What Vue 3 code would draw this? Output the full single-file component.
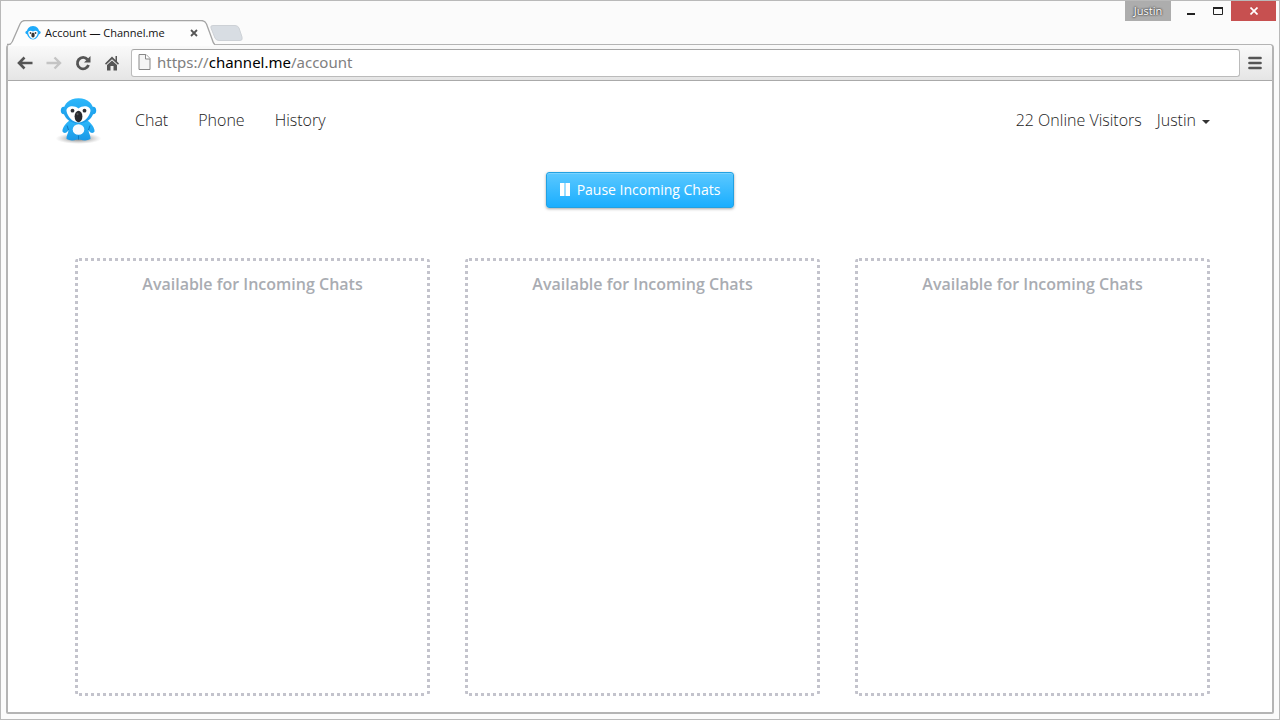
<script setup>
const links = ['Chat', 'Phone', 'History']
const slots = [1, 2, 3]
</script>

<template>
  <div class="window">
    <header class="titlebar">
      <div class="tab">
        <svg class="tab-shape" width="208" height="26" viewBox="0 0 208 26" aria-hidden="true">
          <path d="M0 26C4 25 5 24 6 21L13 4Q14.500 .5 18 .5H194Q198 .5 199.500 4L206 20Q207 24 208 26Z" fill="#fdfdfd" />
          <path d="M0 24.500C4 24.500 5 23 6 20L13 4Q14.500 .5 18 .5H194Q198 .5 199.500 4L205 19Q206.500 24 208 24.500" fill="none" stroke="#a5a5a5" stroke-width="1.300" />
        </svg>
        <svg class="favicon" width="16" height="16" viewBox="0 0 16 16" aria-hidden="true">
          <ellipse cx="2" cy="7.500" rx="1.600" ry="1.800" fill="#1eaafa" />
          <ellipse cx="14" cy="7.500" rx="1.600" ry="1.800" fill="#1eaafa" />
          <path d="M8 1C4 1 1.800 4 1.800 7.500C1.800 11 5 14.500 8 14.500S14.200 11 14.200 7.500C14.200 4 12 1 8 1Z" fill="#1eaafa" />
          <path d="M8 6.500C6 5 3 5.500 3.200 8C3.800 11 6 13.800 8 13.800S12.200 11 12.800 8C13 5.500 10 5 8 6.500Z" fill="#fff" />
          <circle cx="5.500" cy="8" r=".9" fill="#444" />
          <circle cx="10.500" cy="8" r=".9" fill="#444" />
          <ellipse cx="8" cy="10" rx="1.700" ry="2.500" fill="#333" />
        </svg>
        <span class="tab-title">Account — Channel.me</span>
        <button class="tab-close" aria-label="Close tab">
          <svg width="8" height="8" viewBox="0 0 8 8"><path d="M1 1L7 7M7 1L1 7" stroke="#555" stroke-width="1.800" /></svg>
        </button>
      </div>
      <button class="new-tab" aria-label="New tab">
        <svg width="33" height="18" viewBox="0 0 33 18"><path d="M3 1.500H25Q28 1.500 29 4L32 13Q33 16.500 30 16.500H9Q6 16.500 5 14L1 4Q0 1.500 3 1.500Z" fill="#d8dde3" stroke="#cdd1d6" /></svg>
      </button>
      <div class="controls">
        <button class="profile">Justin</button>
        <button class="control" aria-label="Minimize"><svg width="10" height="10" viewBox="0 0 10 10"><path d="M1 8H9" stroke="#222" stroke-width="2" /></svg></button>
        <button class="control" aria-label="Maximize"><svg width="10" height="10" viewBox="0 0 10 10"><path d="M.5 1.500H9.500V8.500H.5Z" fill="none" stroke="#222" /><path d="M0 2H10" stroke="#222" stroke-width="2" /></svg></button>
        <button class="control close" aria-label="Close window"><svg width="8" height="8" viewBox="0 0 8 8"><path d="M.5 .5L7.500 7.500M7.500 .5L.5 7.500" stroke="#fff" stroke-width="1.700" /></svg></button>
      </div>
    </header>

    <div class="frame">
      <div class="toolbar">
        <button class="tool" aria-label="Back">
          <svg width="16" height="14" viewBox="0 0 16 14" fill="none" stroke="#555" stroke-width="2.600"><path d="M2 7H15.500M7.500 1.500L2 7L7.500 12.500" /></svg>
        </button>
        <button class="tool" aria-label="Forward" disabled>
          <svg width="16" height="14" viewBox="0 0 16 14" fill="none" stroke="#c4c4c4" stroke-width="2.400"><path d="M14 7H.5M8.500 1.500L14 7L8.500 12.500" /></svg>
        </button>
        <button class="tool" aria-label="Reload">
          <svg width="16" height="16" viewBox="0 0 16 16"><path d="M12.500 4.500A5.700 5.700 0 1 0 13.500 10" fill="none" stroke="#555" stroke-width="2.800" /><path d="M15.500 1V7.500H9Z" fill="#555" /></svg>
        </button>
        <button class="tool" aria-label="Home">
          <svg width="16" height="16" viewBox="0 0 16 16" fill="#555"><path d="M8 1.500L1 8.500L2 9.800L8 4.200L14 9.800L15 8.500L13 6.500V1H11.500V5Z" /><path d="M3 10L8 5.500L13 10V15.500H9.500V11H6.500V15.500H3Z" /></svg>
        </button>
        <div class="address">
          <svg width="13" height="16" viewBox="0 0 13 16" fill="#f5f5f5" stroke="#888" aria-hidden="true"><path d="M1 .5H8L12 4.500V15.500H1Z" /><path d="M7.500 .5V5H12" fill="#fff" /></svg>
          <div class="url"><span>https://</span><b>channel.me</b><span>/account</span></div>
        </div>
        <button class="menu" aria-label="Menu">
          <svg width="14" height="14" viewBox="0 0 14 14" stroke="#555" stroke-width="2.700" stroke-linecap="round"><path d="M1.500 2H12.500M1.500 7H12.500M1.500 12H12.500" /></svg>
        </button>
      </div>

      <div class="page">
        <nav class="navbar">
          <a class="logo" href="#" aria-label="Channel.me">
            <svg width="48" height="50" viewBox="0 0 48 50">
              <defs>
                <radialGradient id="shade"><stop offset="0" stop-color="#555" stop-opacity=".9" /><stop offset="1" stop-color="#999" stop-opacity="0" /></radialGradient>
                <linearGradient id="fur" x2="0" y2="1"><stop offset="0" stop-color="#2db8fb" /><stop offset="1" stop-color="#1a98e6" /></linearGradient>
              </defs>
              <ellipse cx="23.500" cy="43.500" rx="23" ry="5.500" fill="url(#shade)" />
              <path d="M15 25C11 28 7 33 7.500 36.500C9 39 12 38 13.500 35C13.500 38 11 41 11.500 44Q16 46.500 22 44.500H25Q31 46.500 35.500 44C36 41 33.500 38 33.500 35C35 38 38 39 39.500 36.500C40 33 36 28 32 25Z" fill="url(#fur)" />
              <path d="M12 30.500L13.500 35M35 30.500L33.500 35M23.500 40.500V44.500" stroke="#0d79c0" stroke-width="1" fill="none" />
              <ellipse cx="23.500" cy="34.500" rx="5.800" ry="5.300" fill="#f7fbff" />
              <ellipse cx="8.800" cy="15.500" rx="3" ry="3.800" fill="#1ca4ef" />
              <ellipse cx="38.200" cy="15.500" rx="3" ry="3.800" fill="#1ca4ef" />
              <path d="M23.500 3.300C14 3.300 9 9 8.200 16C9 23.500 15.500 28.500 23.500 28.500S38 23.500 38.800 16C38 9 33 3.300 23.500 3.300Z" fill="url(#fur)" />
              <path d="M23.500 13.500C19 9.500 11 11 11.500 16C12.500 22 18 27.500 23.500 27.500S34.500 22 35.500 16C36 11 28 9.500 23.500 13.500Z" fill="#fff" />
              <circle cx="17.500" cy="15.700" r="1.900" fill="#303338" />
              <circle cx="29.500" cy="15.700" r="1.900" fill="#303338" />
              <ellipse cx="23.500" cy="21.500" rx="3.900" ry="5.700" fill="#292a2e" />
              <ellipse cx="22.500" cy="19" rx="1" ry="1.300" fill="#555" />
            </svg>
          </a>
          <div class="links"><a v-for="link in links" :key="link" href="#">{{ link }}</a></div>
          <div class="account">
            <a href="#">22 Online Visitors</a>
            <button class="user">Justin <i class="caret"></i></button>
          </div>
        </nav>

        <main>
          <button class="pause">
            <svg width="10" height="13" viewBox="0 0 10 13" fill="#fff" aria-hidden="true"><path d="M0 0H4.500V13H0ZM5.500 0H10V13H5.500Z" /></svg>
            Pause Incoming Chats
          </button>
          <div class="slots">
            <section v-for="slot in slots" :key="slot" class="slot"><h2>Available for Incoming Chats</h2></section>
          </div>
        </main>
      </div>
    </div>
  </div>
</template>

<style>
body { background: #fbfbfb; }
</style>

<style scoped>
* { box-sizing: border-box; }
button { border: 0; padding: 0; background: none; font: inherit; color: inherit; }
svg { display: block; flex: none; }
a { color: inherit; text-decoration: none; }

.window {
  min-height: 100vh;
  padding: 0 5px 5px;
  border: 1px solid #b9b9b9;
  background: #fbfbfb;
  display: flex;
  flex-direction: column;
  font-family: "Open Sans", "Noto Sans", sans-serif;
}
.titlebar { height: 43px; display: flex; align-items: flex-start; }
.tab {
  position: relative;
  z-index: 1;
  width: 208px;
  height: 26px;
  margin-top: 19px;
  margin-left: 1px;
  padding: 0 17px 0 18px;
  display: flex;
  align-items: center;
  font-size: 11px;
  line-height: 24px;
  color: #111;
}
.tab-shape { position: absolute; left: 0; top: 0; }
.favicon, .tab-title, .tab-close { position: relative; }
.tab-title { margin-left: 4px; flex: 1; white-space: nowrap; }
.new-tab { margin: 23px 0 0 -5px; }
.controls { margin-left: auto; display: flex; height: 20px; }
.profile {
  width: 46px;
  background: #adadad;
  color: #fff;
  font-size: 11px;
  line-height: 20px;
  text-shadow: 0 0 2px #333, 0 0 2px #333;
}
.control { width: 27px; display: grid; place-items: center; }
.profile + .control { width: 33px; padding-left: 7px; }
.control.close { width: 45px; margin-right: -2px; background: #c75050; }

.frame {
  flex: 1;
  display: flex;
  flex-direction: column;
  border: 2px solid #b4b4b4;
  border-top-width: 1px;
  border-radius: 4px 4px 2px 2px;
  background: #fff;
}
.toolbar {
  height: 36px;
  display: flex;
  align-items: center;
  padding: 0 8px 0 9px;
  border-bottom: 1px solid #aaa;
  border-radius: 3px 3px 0 0;
  background: linear-gradient(#fafafa, #e5e5e5);
}
.tool { width: 16px; margin-right: 13px; }
.tool:nth-child(4) { margin-right: 11px; }
.address {
  flex: 1;
  height: 28px;
  display: flex;
  align-items: center;
  gap: 6px;
  padding: 0 6px 1px;
  border: 1px solid #bbb;
  border-top-color: #a5a5a5;
  border-radius: 3px;
  background: #fff;
}
.url { font: 15px/24px "Noto Sans", sans-serif; color: #808080; }
.url b { font-weight: 400; color: #000; }
.menu { margin: 0 2px 0 8px; }

.page {
  flex: 1;
  display: flex;
  flex-direction: column;
  padding: 0 62px 16px 67px;
}
.navbar { display: flex; align-items: center; height: 78px; font-size: 16px; font-weight: 300; color: #222; white-space: nowrap; }
.logo { margin-left: -20px; }
.links { display: flex; gap: 30px; margin-left: 32px; }
.account { display: flex; gap: 15px; margin-left: auto; }
.user { display: flex; align-items: center; gap: 6px; }
.caret { border: 4px solid transparent; border-top-color: #333; border-bottom: 0; margin-top: 4px; }
main { flex: 1; display: flex; flex-direction: column; }
.pause {
  align-self: center;
  display: flex;
  align-items: center;
  justify-content: center;
  gap: 7px;
  width: 188px;
  height: 36px;
  margin: 13px 5px 50px 0;
  padding-bottom: 2px;
  border: 1px solid #22a1e2;
  border-radius: 3px;
  background: linear-gradient(#5bc8ff, #1aaeff);
  box-shadow: 0 1px 3px rgba(0, 0, 0, .35), inset 0 1px 0 #7ad3ff;
  color: #fff;
  font-size: 14px;
  font-weight: 400;
  white-space: nowrap;
}
.slots { flex: 1; display: grid; grid-template-columns: repeat(3, minmax(0, 1fr)); gap: 35px; }
.slot {
  border-radius: 4px;
  background:
    repeating-linear-gradient(90deg, #c3c3cc 0 3px, transparent 3px 6px) 4px 0 / calc(100% - 8px) 3px no-repeat,
    repeating-linear-gradient(90deg, #c3c3cc 0 3px, transparent 3px 6px) 4px 100% / calc(100% - 8px) 3px no-repeat,
    repeating-linear-gradient(#c3c3cc 0 3px, transparent 3px 6px) 0 1px / 3px calc(100% - 2px) no-repeat,
    repeating-linear-gradient(#c3c3cc 0 3px, transparent 3px 6px) 100% 1px / 3px calc(100% - 2px) no-repeat;
}
h2 { margin: 13px 0 0; font-size: 16px; line-height: 26px; font-weight: 700; font-family: "Open Sans", sans-serif; font-weight: 600; color: #a9acb2; text-align: center; }
</style>
